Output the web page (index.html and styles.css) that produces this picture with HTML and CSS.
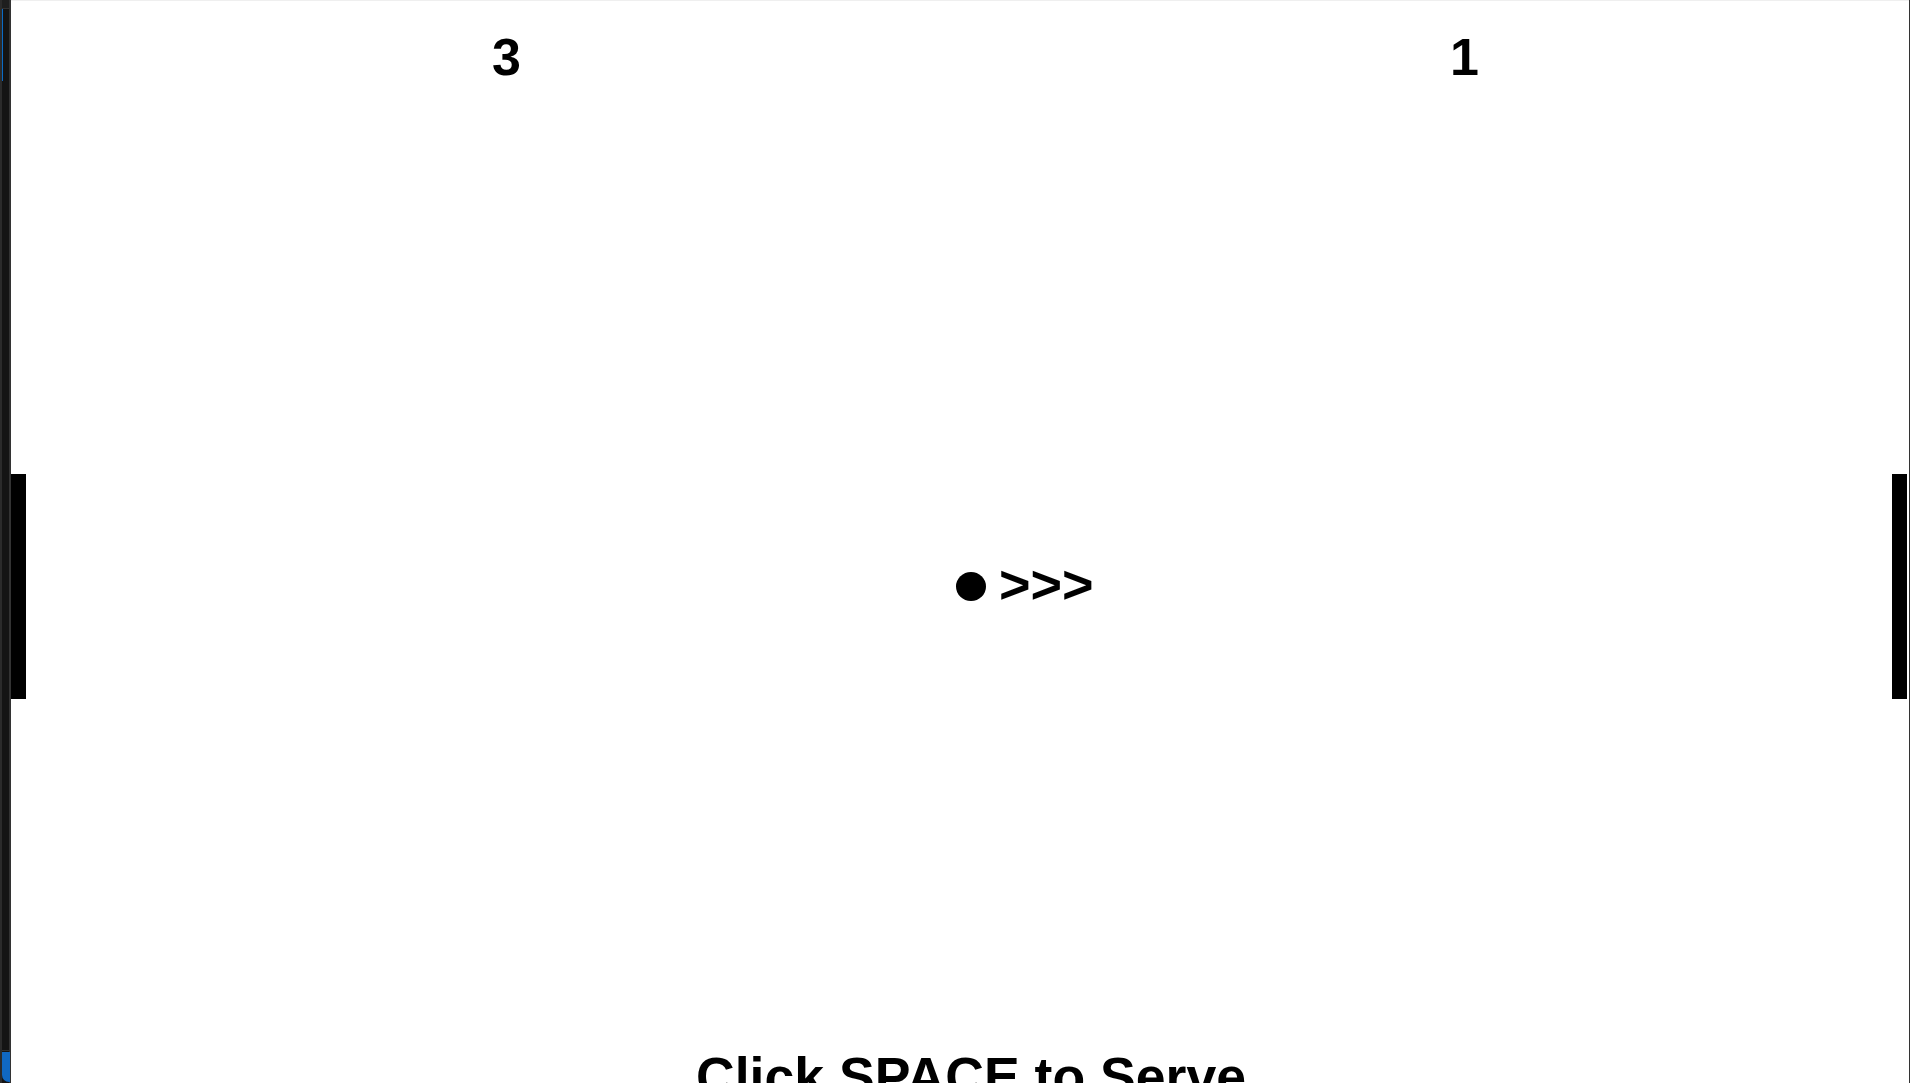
FILE: index.html
```html
<!DOCTYPE html>
<html>
<head>
<meta charset="utf-8">
<title>Pong</title>
<link rel="stylesheet" href="styles.css">
</head>
<body>
<div class="app">
  <aside class="rail">
    <div class="rail-inner">
      <div class="rail-head"></div>
      <div class="rail-indicator"></div>
      <div class="rail-spacer"></div>
      <div class="rail-foot"><div class="rail-blue"></div></div>
    </div>
  </aside>
  <main class="court">
    <div class="score score-left">3</div>
    <div class="score score-right">1</div>
    <div class="paddle paddle-left"></div>
    <div class="paddle paddle-right"></div>
    <div class="ball"></div>
    <div class="arrows">&gt;&gt;&gt;</div>
    <div class="prompt">Click SPACE to Serve</div>
  </main>
  <div class="edge"></div>
</div>
</body>
</html>
```
FILE: styles.css
```css
html, body {
  margin: 0;
  padding: 0;
  width: 1910px;
  height: 1083px;
  overflow: hidden;
  background: #fff;
}
.app {
  display: flex;
  width: 1910px;
  height: 1083px;
}
.rail {
  width: 9px;
  padding-left: 2px;
  background: #2b2b2b;
  display: flex;
}
.rail-inner {
  width: 7px;
  background: #141414;
  border-right: 2px solid #333;
  display: flex;
  flex-direction: column;
}
.rail-head {
  height: 8px;
  background: #1e1e1e;
  border-bottom: 1px solid #333;
}
.rail-indicator {
  width: 1px;
  height: 72px;
  background: #0b6bc6;
}
.rail-spacer {
  flex: 1;
}
.rail-foot {
  height: 31px;
  border-top: 1px solid #333;
  padding-top: 1px;
  margin-right: -1px;
}
.rail-blue {
  height: 30px;
  background: #1068c2;
  border-bottom-left-radius: 7px;
}
.court {
  position: relative;
  flex: 1;
  background: linear-gradient(#efefef, #efefef) top / 100% 1px no-repeat, #fff;
  font-family: "Liberation Sans", Arial, sans-serif;
  font-weight: bold;
  color: #000;
}
.edge {
  width: 1px;
  background: #333;
}
.score {
  position: absolute;
  top: 31px;
  font-size: 52px;
  line-height: 1;
}
.score-left { left: 481px; }
.score-right { left: 1439px; }
.paddle {
  position: absolute;
  top: 474px;
  width: 15px;
  height: 225px;
  background: #000;
}
.paddle-left { left: 0; }
.paddle-right { right: 2px; }
.ball {
  position: absolute;
  left: 945px;
  top: 572px;
  width: 30px;
  height: 29px;
  border-radius: 50%;
  background: #000;
}
.arrows {
  position: absolute;
  left: 988px;
  top: 557px;
  font-size: 54px;
  line-height: 1;
}
.prompt {
  position: absolute;
  left: 685px;
  top: 1050px;
  font-size: 53.6px;
  line-height: 1;
  white-space: nowrap;
}
```
